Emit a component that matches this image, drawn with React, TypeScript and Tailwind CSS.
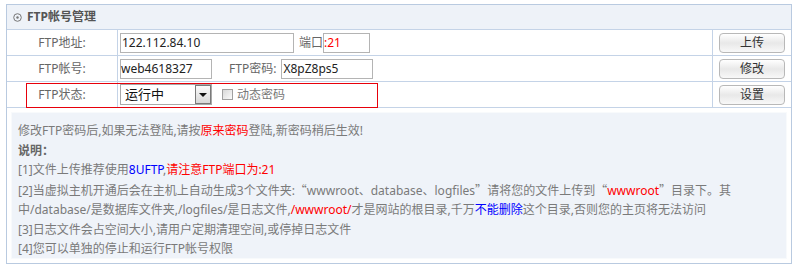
import React from 'react';

const font = { fontFamily: '"Noto Sans", "Noto Sans CJK SC", sans-serif' };

const Btn: React.FC<{ label: string }> = ({ label }) => (
  <button className="w-[66px] h-[20px] rounded-[4px] border border-[#b8b8b8] bg-gradient-to-b from-[#ffffff] via-[#e8e8e8] to-[#f8f8f8] text-[12px] text-[#333] leading-none">
    {label}
  </button>
);

const Q: React.FC<{ children: React.ReactNode }> = ({ children }) => (
  <span className="font-['Noto_Sans_CJK_SC']">{children}</span>
);

export default function App() {
  return (
    <div className="w-[798px] h-[273px] bg-white pt-[4px] pl-[6px]" style={font}>
      <div className="w-[786px] border border-[#b9cae0]">
        {/* 标题 */}
        <div className="h-[25px] bg-[#eef2f8] flex items-center pl-[6px] gap-[5px] border-b border-[#c4d3e7]">
          <svg width="9" height="9" viewBox="0 0 9 9">
            <circle cx="4.5" cy="4.5" r="3.8" fill="none" stroke="#777" strokeWidth="1" />
            <circle cx="4.5" cy="4.5" r="1.2" fill="#777" />
          </svg>
          <span className="text-[12px] font-bold text-[#555]">FTP帐号管理</span>
        </div>

        <div className="text-[12px] text-[#666]">
          {/* 地址 */}
          <div className="flex h-[26px] border-b border-[#c4d3e7]">
            <div className="w-[111px] border-r border-[#c4d3e7] flex items-center justify-center">FTP地址:</div>
            <div className="flex-1 pl-[2px] flex items-center">
              <div className="w-[174px] h-[20px] border border-[#b4b4b4] text-[#222] pl-[1px] leading-[18px]">122.112.84.10</div>
              <span className="ml-[5px]">端口</span>
              <div className="w-[47px] h-[20px] border border-[#b4b4b4] text-[#f00] leading-[18px]">:21</div>
            </div>
            <div className="w-[79px] border-l border-[#c4d3e7] flex items-center justify-center"><Btn label="上传" /></div>
          </div>

          {/* 帐号 */}
          <div className="flex h-[26px] border-b border-[#c4d3e7]">
            <div className="w-[111px] border-r border-[#c4d3e7] flex items-center justify-center">FTP帐号:</div>
            <div className="flex-1 pl-[2px] flex items-center">
              <div className="w-[92px] h-[20px] border border-[#b4b4b4] text-[#222] leading-[18px]">web4618327</div>
              <span className="ml-[17px] mr-[5px]">FTP密码:</span>
              <div className="w-[92px] h-[20px] border border-[#b4b4b4] text-[#222] pl-[1px] leading-[18px]">X8pZ8ps5</div>
            </div>
            <div className="w-[79px] border-l border-[#c4d3e7] flex items-center justify-center"><Btn label="修改" /></div>
          </div>

          {/* 状态 */}
          <div className="relative flex h-[26px] border-b border-[#c4d3e7]">
            <div className="absolute left-[19px] top-[1px] w-[352px] h-[25px] border border-red-600 text-red-600 pointer-events-none" />
            <div className="w-[111px] border-r border-[#c4d3e7] flex items-center justify-center">FTP状态:</div>
            <div className="flex-1 pl-[2px] flex items-center">
              <div className="w-[92px] h-[21px] border border-[#a9a9a9] flex items-center bg-white">
                <span className="flex-1 pl-[4px] text-[13px] text-[#111] leading-none">运行中</span>
                <span className="w-[16px] h-[19px] border border-[#7a7a7a] bg-gradient-to-b from-[#fbfbfb] to-[#d8d8d8] flex items-center justify-center">
                  <span className="w-0 h-0 border-l-[4px] border-r-[4px] border-t-[4px] border-l-transparent border-r-transparent border-t-[#111]" />
                </span>
              </div>
              <span className="ml-[10px] w-[11px] h-[11px] border border-[#a0a0a0] bg-gradient-to-br from-[#d8d8d8] to-[#fbfbfb]" />
              <span className="ml-[4px] text-[#777]">动态密码</span>
            </div>
            <div className="w-[79px] border-l border-[#c4d3e7] flex items-center justify-center"><Btn label="设置" /></div>
          </div>
        </div>

        {/* 说明 */}
        <div className="p-[4px]">
          <div className="bg-[#eff3f9] border border-[#f8fafc] h-[147px] pl-[6px] pt-[8px] text-[12px] leading-[19.5px] text-[#7a7a7a]">
            <div>修改FTP密码后,如果无法登陆,请按<span className="text-[#f00]">原来密码</span>登陆,新密码稍后生效!</div>
            <div className="font-bold text-[#666]">说明：</div>
            <div>[1]文件上传推荐使用<span className="text-[#00f]">8UFTP</span>,<span className="text-[#f00]">请注意FTP端口为:21</span></div>
            <div>[2]当虚拟主机开通后会在主机上自动生成3个文件夹:<Q>“</Q>wwwroot、database、logfiles<Q>”</Q>请将您的文件上传到<Q>“</Q><span className="text-[#f00]">wwwroot</span><Q>”</Q>目录下。其</div>
            <div>中/database/是数据库文件夹,/logfiles/是日志文件,<span className="text-[#f00]">/wwwroot/</span>才是网站的根目录,千万<span className="text-[#00f]">不能删除</span>这个目录,否则您的主页将无法访问</div>
            <div>[3]日志文件会占空间大小,请用户定期清理空间,或停掉日志文件</div>
            <div>[4]您可以单独的停止和运行FTP帐号权限</div>
          </div>
        </div>
      </div>
    </div>
  );
}
